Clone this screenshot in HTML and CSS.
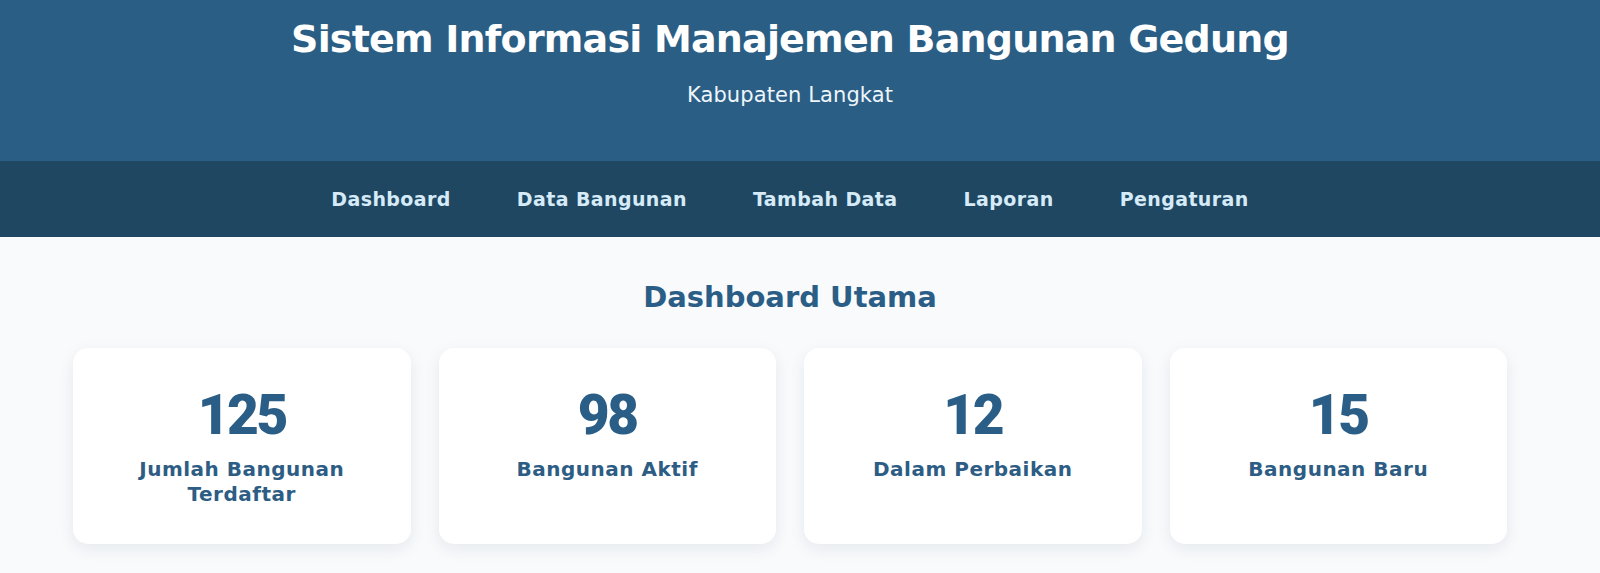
FILE: index.html
```html
<!DOCTYPE html>
<html lang="id">
<head>
<meta charset="utf-8">
<title>Sistem Informasi Manajemen Bangunan Gedung</title>
<link rel="stylesheet" href="styles.css">
</head>
<body>
  <header class="site-header">
    <h1 class="site-title">Sistem Informasi Manajemen Bangunan Gedung</h1>
    <p class="site-subtitle">Kabupaten Langkat</p>
  </header>
  <nav class="site-nav">
    <a class="nav-link" href="#">Dashboard</a>
    <a class="nav-link" href="#">Data Bangunan</a>
    <a class="nav-link" href="#">Tambah Data</a>
    <a class="nav-link" href="#">Laporan</a>
    <a class="nav-link" href="#">Pengaturan</a>
  </nav>
  <main class="main">
    <h2 class="section-title">Dashboard Utama</h2>
    <div class="stats">
      <div class="stat-card">
        <div class="stat-number">125</div>
        <div class="stat-label">Jumlah Bangunan Terdaftar</div>
      </div>
      <div class="stat-card">
        <div class="stat-number">98</div>
        <div class="stat-label">Bangunan Aktif</div>
      </div>
      <div class="stat-card">
        <div class="stat-number">12</div>
        <div class="stat-label">Dalam Perbaikan</div>
      </div>
      <div class="stat-card">
        <div class="stat-number">15</div>
        <div class="stat-label">Bangunan Baru</div>
      </div>
    </div>
  </main>
</body>
</html>
```

FILE: styles.css
```css
* {
  box-sizing: border-box;
}

html, body {
  margin: 0;
  padding: 0;
}

body {
  background: #f8fafc;
  font-family: "DejaVu Sans", "Open Sans", sans-serif;
  color: #2b5e86;
  overflow: hidden;
}

.site-header {
  background: #2a5e85;
  padding: 17px 20px 52px 0;
  text-align: center;
  height: 161px;
}

.site-title {
  margin: 0;
  color: #ffffff;
  font-size: 38px;
  line-height: 45.6px;
  font-weight: 700;
  letter-spacing: -0.8px;
}

.site-subtitle {
  margin: 19px 0 0;
  color: #eef5fb;
  font-size: 21px;
  line-height: 27px;
  font-weight: 400;
  letter-spacing: 0.1px;
}

.site-nav {
  background: #1f4762;
  display: flex;
  justify-content: center;
  gap: 66px;
  padding: 27px 20px 26px 0;
  height: 76px;
}

.nav-link {
  color: #d6ebf8;
  text-decoration: none;
  font-size: 19px;
  line-height: 23px;
  font-weight: 700;
  letter-spacing: 0.4px;
}

.main {
  padding: 43px 93px 40px 73px;
}

.section-title {
  margin: 0 0 33px;
  text-align: center;
  font-size: 29px;
  line-height: 35px;
  font-weight: 700;
  color: #2b5e86;
}

.stats {
  display: grid;
  grid-template-columns: repeat(4, 1fr);
  gap: 28px;
}

.stat-card {
  background: #ffffff;
  border-radius: 15px;
  box-shadow: 0 5px 16px rgba(20, 40, 60, 0.08);
  padding: 34px 20px 38px;
  text-align: center;
  min-height: 196px;
}

.stat-number {
  font-family: Roboto, "Liberation Sans", sans-serif;
  font-size: 55px;
  line-height: 66px;
  font-weight: 900;
  letter-spacing: -2.5px;
  color: #2b5e86;
}

.stat-label {
  margin-top: 9px;
  font-size: 20px;
  line-height: 24.5px;
  font-weight: 700;
  letter-spacing: 0.5px;
  color: #2d5d84;
}
```
